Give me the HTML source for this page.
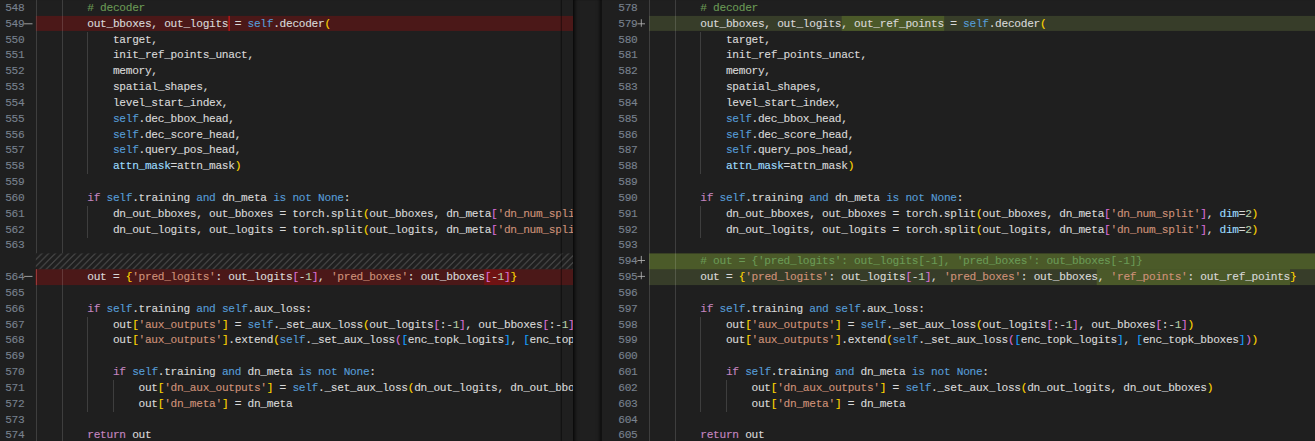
<!DOCTYPE html>
<html lang="en"><head><meta charset="utf-8"><title>rtdetr.py — diff</title>
<style>
html,body{margin:0;padding:0;background:#1f1f1f;overflow:hidden;width:1315px;height:441px}
body{width:1315px;height:441px;position:relative}
#stage{position:absolute;left:0;top:0;width:1578px;height:529.2px;transform:translate(0,0.08px) scale(0.833333);transform-origin:0 0;background:#1f1f1f;
 font-family:"Liberation Mono","DejaVu Sans Mono",monospace;font-size:13.4px;letter-spacing:-0.3443px;color:#d8d8d8;overflow:hidden}
.pane{position:absolute;top:0;height:529.2px;overflow:hidden;background:#1f1f1f}
.row{position:absolute;left:0;right:0;height:19px;line-height:19px;white-space:pre}
.row>*{position:absolute;top:0}
.row i{display:block;height:19px}
.bg{right:0}
.rem{background:rgba(255,0,0,.2)}
.add{background:rgba(155,185,85,.2)}
.addfull{background:rgba(156,196,62,.36)}
.hatch{background-image:linear-gradient(-45deg,rgba(204,204,204,.2) 12.5%,transparent 12.5%,transparent 50%,rgba(204,204,204,.2) 50%,rgba(204,204,204,.2) 62.5%,transparent 62.5%,transparent 100%);background-size:8px 8px}
.hl.L{background:rgba(255,0,0,.2)}
.hl.R{background:rgba(156,204,44,.2)}
.row i.r1{top:0.2px;height:18px}
.mk.L{width:2.4px;background:#a81818}
#guides{position:absolute;left:0;top:0;width:1315px;height:441px;overflow:hidden;pointer-events:none}
#guides i{position:absolute;display:block;width:1px;background:rgba(255,255,255,.14)}
.ln,.code{top:0px!important;-webkit-text-stroke:0.15px}
.ln{color:#78818e}
.minus{width:10.5px;background:linear-gradient(#b4b4b4,#b4b4b4) no-repeat 0 8.5px/10.2px 1px}
.plus{width:10px;background:linear-gradient(#b4b4b4,#b4b4b4) no-repeat 0.2px 8.6px/9.2px 1px,linear-gradient(#b4b4b4,#b4b4b4) no-repeat 4.3px 4px/1px 9.4px}
.sbline{position:absolute;top:0;width:1px;height:100%;background:rgba(0,0,0,.6)}
#gut{position:absolute;top:0;height:100%;background:#1f1f1f;box-shadow:inset 6px 0 5px -5px #000,inset -6px 0 5px -5px #000}
b{font-weight:normal}
.c{color:#6a9955}
.k{color:#c586c0}
.b{color:#569cd6}
.s{color:#ce9178}
.n{color:#b5cea8}
.p{color:#9cdcfe}
.y{color:#ffd700}
.o{color:#da70d6}
.u{color:#179fff}
</style></head>
<body>
<div id="stage">
<div class="pane L" style="left:0px;width:687.6px">
<div class="row" style="top:0px">
<span class="ln" style="right:658.3px">548</span>
<span class="code" style="left:43.2px">        <b class="c"># decoder</b></span>
</div>
<div class="row" style="top:19px">
<i class="bg rem r1" style="left:43.2px"></i>
<i class="mk L r1" style="left:273.66px"></i>
<span class="ln" style="right:658.3px">549</span>
<i class="minus" style="left:29.3px"></i>
<span class="code" style="left:43.2px">        out_bboxes, out_logits = <b class="b">self</b>.decoder<b class="y">(</b></span>
</div>
<div class="row" style="top:38px">
<span class="ln" style="right:658.3px">550</span>
<span class="code" style="left:43.2px">            target,</span>
</div>
<div class="row" style="top:57px">
<span class="ln" style="right:658.3px">551</span>
<span class="code" style="left:43.2px">            init_ref_points_unact,</span>
</div>
<div class="row" style="top:76px">
<span class="ln" style="right:658.3px">552</span>
<span class="code" style="left:43.2px">            memory,</span>
</div>
<div class="row" style="top:95px">
<span class="ln" style="right:658.3px">553</span>
<span class="code" style="left:43.2px">            spatial_shapes,</span>
</div>
<div class="row" style="top:114px">
<span class="ln" style="right:658.3px">554</span>
<span class="code" style="left:43.2px">            level_start_index,</span>
</div>
<div class="row" style="top:133px">
<span class="ln" style="right:658.3px">555</span>
<span class="code" style="left:43.2px">            <b class="b">self</b>.dec_bbox_head,</span>
</div>
<div class="row" style="top:152px">
<span class="ln" style="right:658.3px">556</span>
<span class="code" style="left:43.2px">            <b class="b">self</b>.dec_score_head,</span>
</div>
<div class="row" style="top:171px">
<span class="ln" style="right:658.3px">557</span>
<span class="code" style="left:43.2px">            <b class="b">self</b>.query_pos_head,</span>
</div>
<div class="row" style="top:190px">
<span class="ln" style="right:658.3px">558</span>
<span class="code" style="left:43.2px">            <b class="p">attn_mask</b>=attn_mask<b class="y">)</b></span>
</div>
<div class="row" style="top:209px">
<span class="ln" style="right:658.3px">559</span>
</div>
<div class="row" style="top:228px">
<span class="ln" style="right:658.3px">560</span>
<span class="code" style="left:43.2px">        <b class="k">if</b> <b class="b">self</b>.training <b class="b">and</b> dn_meta <b class="b">is</b> <b class="b">not</b> <b class="b">None</b>:</span>
</div>
<div class="row" style="top:247px">
<span class="ln" style="right:658.3px">561</span>
<span class="code" style="left:43.2px">            dn_out_bboxes, out_bboxes = torch.split<b class="y">(</b>out_bboxes, dn_meta<b class="o">[</b><b class="s">'dn_num_split'</b><b class="o">]</b>, <b class="p">dim</b>=<b class="n">2</b><b class="y">)</b></span>
</div>
<div class="row" style="top:266px">
<span class="ln" style="right:658.3px">562</span>
<span class="code" style="left:43.2px">            dn_out_logits, out_logits = torch.split<b class="y">(</b>out_logits, dn_meta<b class="o">[</b><b class="s">'dn_num_split'</b><b class="o">]</b>, <b class="p">dim</b>=<b class="n">2</b><b class="y">)</b></span>
</div>
<div class="row" style="top:285px">
<span class="ln" style="right:658.3px">563</span>
</div>
<div class="row" style="top:304px">
<i class="bg hatch" style="left:43.2px"></i>
</div>
<div class="row" style="top:323px">
<i class="bg rem" style="left:43.2px"></i>
<i class="mk L" style="left:43.2px;width:1.3px"></i>
<i class="hl L" style="left:580.99px;width:30.888px"></i>
<span class="ln" style="right:658.3px">564</span>
<i class="minus" style="left:29.3px;top:-0.7px"></i>
<span class="code" style="left:43.2px">        out = <b class="y">{</b><b class="s">'pred_logits'</b>: out_logits<b class="o">[</b>-<b class="n">1</b><b class="o">]</b>, <b class="s">'pred_boxes'</b>: out_bboxes<b class="o">[</b>-<b class="n">1</b><b class="o">]</b><b class="y">}</b></span>
</div>
<div class="row" style="top:342px">
<span class="ln" style="right:658.3px">565</span>
</div>
<div class="row" style="top:361px">
<span class="ln" style="right:658.3px">566</span>
<span class="code" style="left:43.2px">        <b class="k">if</b> <b class="b">self</b>.training <b class="b">and</b> <b class="b">self</b>.aux_loss:</span>
</div>
<div class="row" style="top:380px">
<span class="ln" style="right:658.3px">567</span>
<span class="code" style="left:43.2px">            out<b class="y">[</b><b class="s">'aux_outputs'</b><b class="y">]</b> = <b class="b">self</b>._set_aux_loss<b class="y">(</b>out_logits<b class="o">[</b>:-<b class="n">1</b><b class="o">]</b>, out_bboxes<b class="o">[</b>:-<b class="n">1</b><b class="o">]</b><b class="y">)</b></span>
</div>
<div class="row" style="top:399px">
<span class="ln" style="right:658.3px">568</span>
<span class="code" style="left:43.2px">            out<b class="y">[</b><b class="s">'aux_outputs'</b><b class="y">]</b>.extend<b class="y">(</b><b class="b">self</b>._set_aux_loss<b class="o">(</b><b class="u">[</b>enc_topk_logits<b class="u">]</b>, <b class="u">[</b>enc_topk_bboxes<b class="u">]</b><b class="o">)</b><b class="y">)</b></span>
</div>
<div class="row" style="top:418px">
<span class="ln" style="right:658.3px">569</span>
</div>
<div class="row" style="top:437px">
<span class="ln" style="right:658.3px">570</span>
<span class="code" style="left:43.2px">            <b class="k">if</b> <b class="b">self</b>.training <b class="b">and</b> dn_meta <b class="b">is</b> <b class="b">not</b> <b class="b">None</b>:</span>
</div>
<div class="row" style="top:456px">
<span class="ln" style="right:658.3px">571</span>
<span class="code" style="left:43.2px">                out<b class="y">[</b><b class="s">'dn_aux_outputs'</b><b class="y">]</b> = <b class="b">self</b>._set_aux_loss<b class="y">(</b>dn_out_logits, dn_out_bboxes<b class="y">)</b></span>
</div>
<div class="row" style="top:475px">
<span class="ln" style="right:658.3px">572</span>
<span class="code" style="left:43.2px">                out<b class="y">[</b><b class="s">'dn_meta'</b><b class="y">]</b> = dn_meta</span>
</div>
<div class="row" style="top:494px">
<span class="ln" style="right:658.3px">573</span>
</div>
<div class="row" style="top:513px">
<span class="ln" style="right:658.3px">574</span>
<span class="code" style="left:43.2px">        <b class="k">return</b> out</span>
</div>
<i class="sbline" style="left:672.9px"></i>
</div>
<div id="gut" style="left:687.6px;width:34.2px"></div>
<div class="pane R" style="left:721.8px;width:856.2px">
<div class="row" style="top:0px">
<span class="ln" style="right:813px">578</span>
<span class="code" style="left:57px">        <b class="c"># decoder</b></span>
</div>
<div class="row" style="top:19px">
<i class="bg add r1" style="left:57px"></i>
<i class="hl R r1" style="left:287.91px;width:123.152px"></i>
<span class="ln" style="right:813px">579</span>
<i class="plus" style="left:43.2px"></i>
<span class="code" style="left:57px">        out_bboxes, out_logits, out_ref_points = <b class="b">self</b>.decoder<b class="y">(</b></span>
</div>
<div class="row" style="top:38px">
<span class="ln" style="right:813px">580</span>
<span class="code" style="left:57px">            target,</span>
</div>
<div class="row" style="top:57px">
<span class="ln" style="right:813px">581</span>
<span class="code" style="left:57px">            init_ref_points_unact,</span>
</div>
<div class="row" style="top:76px">
<span class="ln" style="right:813px">582</span>
<span class="code" style="left:57px">            memory,</span>
</div>
<div class="row" style="top:95px">
<span class="ln" style="right:813px">583</span>
<span class="code" style="left:57px">            spatial_shapes,</span>
</div>
<div class="row" style="top:114px">
<span class="ln" style="right:813px">584</span>
<span class="code" style="left:57px">            level_start_index,</span>
</div>
<div class="row" style="top:133px">
<span class="ln" style="right:813px">585</span>
<span class="code" style="left:57px">            <b class="b">self</b>.dec_bbox_head,</span>
</div>
<div class="row" style="top:152px">
<span class="ln" style="right:813px">586</span>
<span class="code" style="left:57px">            <b class="b">self</b>.dec_score_head,</span>
</div>
<div class="row" style="top:171px">
<span class="ln" style="right:813px">587</span>
<span class="code" style="left:57px">            <b class="b">self</b>.query_pos_head,</span>
</div>
<div class="row" style="top:190px">
<span class="ln" style="right:813px">588</span>
<span class="code" style="left:57px">            <b class="p">attn_mask</b>=attn_mask<b class="y">)</b></span>
</div>
<div class="row" style="top:209px">
<span class="ln" style="right:813px">589</span>
</div>
<div class="row" style="top:228px">
<span class="ln" style="right:813px">590</span>
<span class="code" style="left:57px">        <b class="k">if</b> <b class="b">self</b>.training <b class="b">and</b> dn_meta <b class="b">is</b> <b class="b">not</b> <b class="b">None</b>:</span>
</div>
<div class="row" style="top:247px">
<span class="ln" style="right:813px">591</span>
<span class="code" style="left:57px">            dn_out_bboxes, out_bboxes = torch.split<b class="y">(</b>out_bboxes, dn_meta<b class="o">[</b><b class="s">'dn_num_split'</b><b class="o">]</b>, <b class="p">dim</b>=<b class="n">2</b><b class="y">)</b></span>
</div>
<div class="row" style="top:266px">
<span class="ln" style="right:813px">592</span>
<span class="code" style="left:57px">            dn_out_logits, out_logits = torch.split<b class="y">(</b>out_logits, dn_meta<b class="o">[</b><b class="s">'dn_num_split'</b><b class="o">]</b>, <b class="p">dim</b>=<b class="n">2</b><b class="y">)</b></span>
</div>
<div class="row" style="top:285px">
<span class="ln" style="right:813px">593</span>
</div>
<div class="row" style="top:304px">
<i class="bg addfull" style="left:57px"></i>
<span class="ln" style="right:813px">594</span>
<i class="plus" style="left:43.2px;top:-0.7px"></i>
<span class="code" style="left:57px">        <b class="c"># out = {'pred_logits': out_logits[-1], 'pred_boxes': out_bboxes[-1]}</b></span>
</div>
<div class="row" style="top:323px">
<i class="bg add" style="left:57px"></i>
<i class="hl R" style="left:594.59px;width:232.11px"></i>
<span class="ln" style="right:813px">595</span>
<i class="plus" style="left:43.2px;top:-0.7px"></i>
<span class="code" style="left:57px">        out = <b class="y">{</b><b class="s">'pred_logits'</b>: out_logits<b class="o">[</b>-<b class="n">1</b><b class="o">]</b>, <b class="s">'pred_boxes'</b>: out_bboxes, <b class="s">'ref_points'</b>: out_ref_points<b class="y">}</b></span>
</div>
<div class="row" style="top:342px">
<span class="ln" style="right:813px">596</span>
</div>
<div class="row" style="top:361px">
<span class="ln" style="right:813px">597</span>
<span class="code" style="left:57px">        <b class="k">if</b> <b class="b">self</b>.training <b class="b">and</b> <b class="b">self</b>.aux_loss:</span>
</div>
<div class="row" style="top:380px">
<span class="ln" style="right:813px">598</span>
<span class="code" style="left:57px">            out<b class="y">[</b><b class="s">'aux_outputs'</b><b class="y">]</b> = <b class="b">self</b>._set_aux_loss<b class="y">(</b>out_logits<b class="o">[</b>:-<b class="n">1</b><b class="o">]</b>, out_bboxes<b class="o">[</b>:-<b class="n">1</b><b class="o">]</b><b class="y">)</b></span>
</div>
<div class="row" style="top:399px">
<span class="ln" style="right:813px">599</span>
<span class="code" style="left:57px">            out<b class="y">[</b><b class="s">'aux_outputs'</b><b class="y">]</b>.extend<b class="y">(</b><b class="b">self</b>._set_aux_loss<b class="o">(</b><b class="u">[</b>enc_topk_logits<b class="u">]</b>, <b class="u">[</b>enc_topk_bboxes<b class="u">]</b><b class="o">)</b><b class="y">)</b></span>
</div>
<div class="row" style="top:418px">
<span class="ln" style="right:813px">600</span>
</div>
<div class="row" style="top:437px">
<span class="ln" style="right:813px">601</span>
<span class="code" style="left:57px">            <b class="k">if</b> <b class="b">self</b>.training <b class="b">and</b> dn_meta <b class="b">is</b> <b class="b">not</b> <b class="b">None</b>:</span>
</div>
<div class="row" style="top:456px">
<span class="ln" style="right:813px">602</span>
<span class="code" style="left:57px">                out<b class="y">[</b><b class="s">'dn_aux_outputs'</b><b class="y">]</b> = <b class="b">self</b>._set_aux_loss<b class="y">(</b>dn_out_logits, dn_out_bboxes<b class="y">)</b></span>
</div>
<div class="row" style="top:475px">
<span class="ln" style="right:813px">603</span>
<span class="code" style="left:57px">                out<b class="y">[</b><b class="s">'dn_meta'</b><b class="y">]</b> = dn_meta</span>
</div>
<div class="row" style="top:494px">
<span class="ln" style="right:813px">604</span>
</div>
<div class="row" style="top:513px">
<span class="ln" style="right:813px">605</span>
<span class="code" style="left:57px">        <b class="k">return</b> out</span>
</div>
</div>
</div>
<div id="guides">
<i style="left:36px;top:0px;height:253px"></i>
<i style="left:36px;top:269px;height:172px"></i>
<i style="left:62px;top:0px;height:253px"></i>
<i style="left:62px;top:269px;height:172px"></i>
<i style="left:87px;top:32px;height:142px"></i>
<i style="left:87px;top:206px;height:32px"></i>
<i style="left:87px;top:317px;height:95px"></i>
<i style="left:113px;top:380px;height:32px"></i>
<i style="left:649px;top:0px;height:441px"></i>
<i style="left:675px;top:0px;height:441px"></i>
<i style="left:700px;top:32px;height:142px"></i>
<i style="left:700px;top:206px;height:32px"></i>
<i style="left:700px;top:317px;height:95px"></i>
<i style="left:726px;top:380px;height:32px"></i>
</div>
</body></html>
